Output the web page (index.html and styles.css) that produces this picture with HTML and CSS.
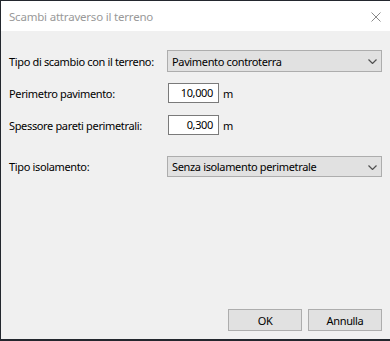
FILE: index.html
```html
<!DOCTYPE html>
<html lang="it">
<head>
<meta charset="utf-8">
<title>Scambi attraverso il terreno</title>
<link rel="stylesheet" href="styles.css">
</head>
<body>
<div class="window">
  <div class="titlebar">
    <span class="title">Scambi attraverso il terreno</span>
    <svg class="close" width="10" height="10" viewBox="0 0 10 10"><path d="M0.5 0.5L9.5 9.5M9.5 0.5L0.5 9.5" stroke="#8a8a8a" stroke-width="1" fill="none"/></svg>
  </div>
  <div class="content">
    <div class="row r1">
      <span class="label">Tipo di scambio con il terreno:</span>
      <div class="select"><span>Pavimento controterra</span><svg class="chev" width="9" height="5" viewBox="0 0 9 5"><path d="M0.5 0.5L4.5 4.5L8.5 0.5" stroke="#505050" stroke-width="1.2" fill="none"/></svg></div>
    </div>
    <div class="row r2">
      <span class="label">Perimetro pavimento:</span>
      <div class="input">10,000</div><span class="unit">m</span>
    </div>
    <div class="row r3">
      <span class="label">Spessore pareti perimetrali:</span>
      <div class="input">0,300</div><span class="unit">m</span>
    </div>
    <div class="row r4">
      <span class="label">Tipo isolamento:</span>
      <div class="select"><span>Senza isolamento perimetrale</span><svg class="chev" width="9" height="5" viewBox="0 0 9 5"><path d="M0.5 0.5L4.5 4.5L8.5 0.5" stroke="#505050" stroke-width="1.2" fill="none"/></svg></div>
    </div>
    <div class="buttons">
      <div class="btn">OK</div>
      <div class="btn">Annulla</div>
    </div>
  </div>
</div>
</body>
</html>
```
FILE: styles.css
```css
html, body {
  margin: 0;
  padding: 0;
}
body {
  background: #23272e;
  width: 390px;
  height: 341px;
  overflow: hidden;
  font-family: "Noto Sans", "Open Sans", sans-serif;
  font-size: 11px;
  letter-spacing: -0.35px;
  color: #000;
  white-space: nowrap;
}
.window {
  margin: 1px 0 0 1px;
  width: 389px;
  height: 338px;
  background: #f0f0f0;
  display: flex;
  flex-direction: column;
}
.titlebar {
  height: 30px;
  background: #fff;
  display: flex;
  align-items: center;
  justify-content: space-between;
  padding: 0 9px 0 8px;
  flex-shrink: 0;
}
.title {
  color: #999;
  font-size: 11.5px;
  letter-spacing: -0.2px;
}
.close {
  margin-top: 2px;
}
.content {
  flex: 1;
  display: flex;
  flex-direction: column;
  padding: 0 8px 0 8px;
}
.row {
  display: flex;
  align-items: center;
}
.label {
  width: 158px;
  flex-shrink: 0;
}
.r1 { margin-top: 19px; }
.r2 { margin-top: 11px; }
.r3 { margin-top: 12px; }
.r4 { margin-top: 21px; }
.select {
  box-sizing: border-box;
  width: 215px;
  height: 22px;
  background: #e1e1e1;
  border: 1px solid #adadad;
  display: flex;
  align-items: center;
  justify-content: space-between;
  padding: 0 4px 0 4px;
}
.r4 .select { height: 21px; }
.chev { margin-top: 1px; }
.input {
  box-sizing: border-box;
  width: 51px;
  height: 20px;
  margin-left: 1px;
  background: #fff;
  border: 1px solid #7a7a7a;
  text-align: right;
  padding-right: 5px;
  line-height: 18px;
}
.unit {
  margin-left: 4px;
}
.buttons {
  margin-top: auto;
  margin-bottom: 8px;
  display: flex;
  justify-content: flex-end;
  gap: 6px;
}
.btn {
  box-sizing: border-box;
  width: 74px;
  height: 22px;
  background: #e1e1e1;
  border: 1px solid #adadad;
  display: flex;
  align-items: center;
  justify-content: center;
}
```
